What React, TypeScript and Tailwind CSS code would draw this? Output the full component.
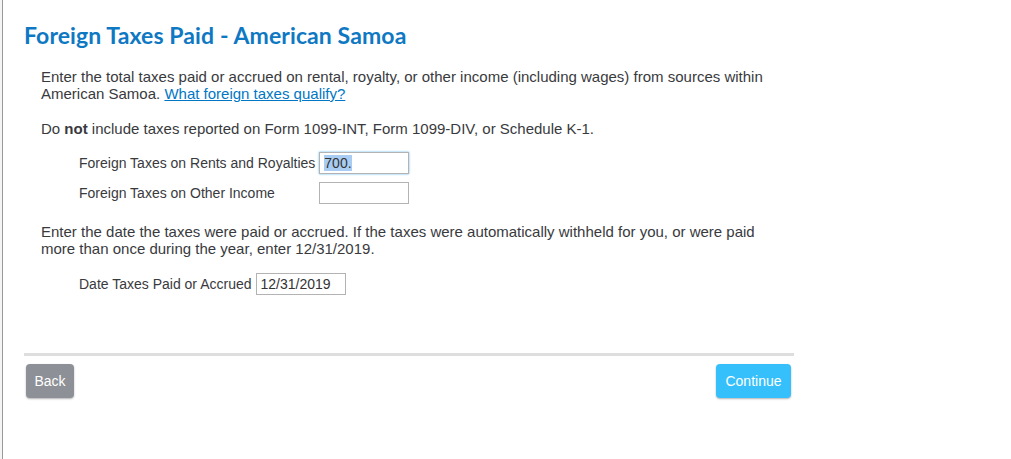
const inputBase =
  "h-[22px] w-[90px] border border-[#b3b3b3] bg-white px-[4px] text-[14px] text-[#333] outline-none";

const FieldRow = ({
  label,
  children,
}: {
  label: string;
  children: React.ReactNode;
}) => (
  <div className="flex items-center gap-[4px]">
    <span className="whitespace-nowrap">{label}</span>
    {children}
  </div>
);

export default function App() {
  return (
    <div className="flex h-[459px] w-[1011px] bg-white font-['Liberation_Sans',Arial,sans-serif] text-[14px] text-[#393a3d]">
      {/* clipped edge of the window behind */}
      <div className="w-[3px] shrink-0 border-r-[1px] border-[#9a9a9a] bg-[#f4f4f4]" />

      <div className="w-[791px] pl-[21px]">
        <h1 className="mt-[22px] font-['Lato',sans-serif] text-[23px] font-bold leading-[26px] tracking-[0.1px] text-[#0e78c3]">
          Foreign Taxes Paid - American Samoa
        </h1>

        <div className="pl-[17px] text-[15px] leading-[17px]">
          <p className="mt-[20px]">
            Enter the total taxes paid or accrued on rental, royalty, or other income (including wages) from sources within
            <br />
            American Samoa.{" "}
            <a href="#" className="text-[#0077c5] underline">
              What foreign taxes qualify?
            </a>
          </p>

          <p className="mt-[18px]">
            Do <b>not</b> include taxes reported on Form 1099-INT, Form 1099-DIV, or Schedule K-1.
          </p>

          <div className="mt-[15px] flex flex-col gap-[8px] pl-[38px] text-[14px]">
            <FieldRow label="Foreign Taxes on Rents and Royalties">
              <div className={`${inputBase} flex items-center border-[#1a8fe0] shadow-[0_0_2px_#5eb6f0]`}>
                <span className="bg-[#a9cdf2] leading-[16px]">700.</span>
              </div>
            </FieldRow>
            <div className="flex items-center">
              <span className="w-[240px] whitespace-nowrap">Foreign Taxes on Other Income</span>
              <div className={inputBase} />
            </div>
          </div>

          <p className="mt-[19px]">
            Enter the date the taxes were paid or accrued. If the taxes were automatically withheld for you, or were paid
            <br />
            more than once during the year, enter 12/31/2019.
          </p>

          <div className="mt-[16px] pl-[38px] text-[14px]">
            <FieldRow label="Date Taxes Paid or Accrued">
              <div className={`${inputBase} flex items-center text-[#222]`}>12/31/2019</div>
            </FieldRow>
          </div>
        </div>

        <div className="mt-[58px] h-[3px] bg-[#dedede]" />

        <div className="mt-[8px] flex justify-between pl-[2px] pr-[3px]">
          <button className="h-[34px] w-[48px] rounded-[4px] bg-[#8d9096] text-[14px] text-white shadow-[0_1px_2px_rgba(0,0,0,0.3)]">
            Back
          </button>
          <button className="h-[34px] w-[75px] rounded-[4px] bg-[#36c0fb] text-[14px] text-white shadow-[0_1px_2px_rgba(0,0,0,0.3)]">
            Continue
          </button>
        </div>
      </div>
    </div>
  );
}
